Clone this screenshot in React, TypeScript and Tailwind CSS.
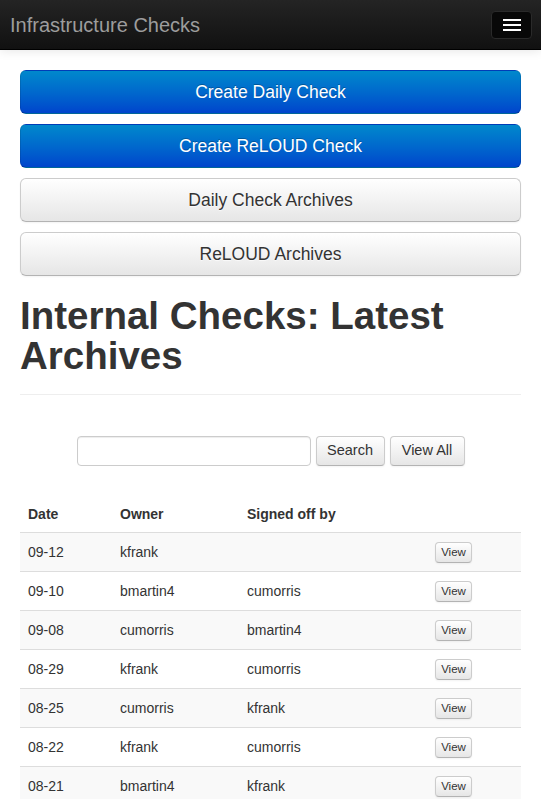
const rows = [
  { date: '09-12', owner: 'kfrank', signed: '' },
  { date: '09-10', owner: 'bmartin4', signed: 'cumorris' },
  { date: '09-08', owner: 'cumorris', signed: 'bmartin4' },
  { date: '08-29', owner: 'kfrank', signed: 'cumorris' },
  { date: '08-25', owner: 'cumorris', signed: 'kfrank' },
  { date: '08-22', owner: 'kfrank', signed: 'cumorris' },
  { date: '08-21', owner: 'bmartin4', signed: 'kfrank' },
]

const primaryBtn =
  'flex h-[44px] w-full items-center justify-center rounded-[6px] border border-[rgba(0,0,0,0.1)] border-b-[rgba(0,0,0,0.25)] bg-gradient-to-b from-[#0088cc] to-[#0044cc] text-[17.5px] text-white [text-shadow:0_-1px_0_rgba(0,0,0,0.25)]'

const defaultBtn =
  'flex h-[44px] w-full items-center justify-center rounded-[6px] border border-[#cccccc] border-b-[#b3b3b3] bg-gradient-to-b from-white to-[#e6e6e6] text-[17.5px] text-[#333333] shadow-[inset_0_1px_0_rgba(255,255,255,0.2),0_1px_2px_rgba(0,0,0,0.05)] [text-shadow:0_1px_1px_rgba(255,255,255,0.75)]'

const smallBtn =
  'rounded-[4px] border border-[#cccccc] border-b-[#b3b3b3] bg-gradient-to-b from-white to-[#e6e6e6] text-[#333333] shadow-[inset_0_1px_0_rgba(255,255,255,0.2),0_1px_2px_rgba(0,0,0,0.05)]'

export default function App() {
  return (
    <div className="min-h-screen bg-white font-['Liberation_Sans',Arial,sans-serif] text-[14px] text-[#333333]">
      {/* Navbar */}
      <nav className="relative z-10 flex h-[50px] items-center justify-between border-b border-[#000000] bg-gradient-to-b from-[#242424] to-[#111111] pl-[10px] pr-[9px] shadow-[0_1px_10px_rgba(0,0,0,0.1)]">
        <span className="text-[20px] leading-[20px] text-[#9d9d9d]">Infrastructure Checks</span>
        <button
          aria-label="Toggle navigation"
          className="flex h-[28px] w-[41px] flex-col items-center justify-center gap-[3px] rounded-[4px] border border-[#2a2a2a] bg-[#080808]"
        >
          <span className="block h-[2px] w-[18px] bg-white" />
          <span className="block h-[2px] w-[18px] bg-white" />
          <span className="block h-[2px] w-[18px] bg-white" />
        </button>
      </nav>

      <main className="px-[20px] pt-[20px]">
        <div className="flex flex-col gap-[10px]">
          <button className={primaryBtn}>Create Daily Check</button>
          <button className={primaryBtn}>Create ReLOUD Check</button>
          <button className={defaultBtn}>Daily Check Archives</button>
          <button className={defaultBtn}>ReLOUD Archives</button>
        </div>

        <h1 className="mt-[20px] border-b border-[#eeeeee] pb-[18px] text-[38.5px] font-bold leading-[40px] text-[#333333]">
          Internal Checks: Latest Archives
        </h1>

        <form className="mt-[41px] flex items-center justify-center gap-[5px]" onSubmit={(e) => e.preventDefault()}>
          <input className="h-[30px] w-[234px] rounded-[4px] border border-[#cccccc] px-[8px] text-[14px] shadow-[inset_0_1px_1px_rgba(0,0,0,0.075)] outline-none" />
          <button className={`${smallBtn} h-[30px] w-[69px] text-[14.5px]`}>Search</button>
          <button className={`${smallBtn} h-[30px] w-[75px] text-[14.5px]`}>View All</button>
        </form>

        <div className="mt-[30px]">
          <div className="grid h-[36px] grid-cols-[92px_127px_188px_1fr] items-center font-bold">
            <div className="px-[8px]">Date</div>
            <div className="px-[8px]">Owner</div>
            <div className="px-[8px]">Signed off by</div>
            <div />
          </div>
          {rows.map((r, i) => (
            <div
              key={r.date}
              className={`grid h-[39px] grid-cols-[92px_127px_188px_1fr] items-center border-t border-[#dddddd] ${
                i % 2 === 0 ? 'bg-[#f9f9f9]' : 'bg-white'
              }`}
            >
              <div className="px-[8px]">{r.date}</div>
              <div className="px-[8px]">{r.owner}</div>
              <div className="px-[8px]">{r.signed}</div>
              <div className="px-[8px]">
                <button className={`${smallBtn} h-[21px] w-[37px] rounded-[3px] text-[11.5px] leading-[19px]`}>View</button>
              </div>
            </div>
          ))}
        </div>
      </main>
    </div>
  )
}
